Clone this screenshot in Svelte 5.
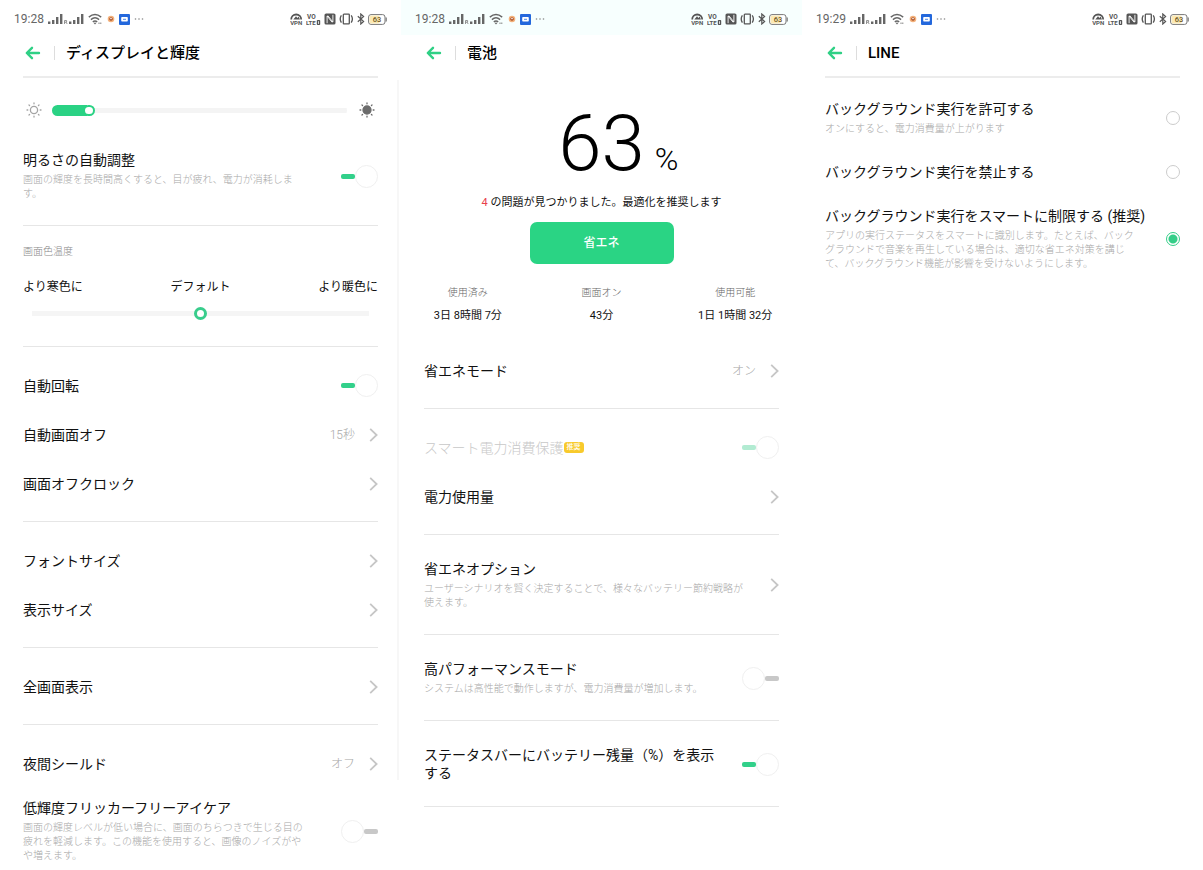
<script>
  let brightness = $state(11);
  let temperature = $state(50);
  let background = $state('smart');

  const rotation = [
    { type: 'toggle', title: '自動回転', on: true },
    { type: 'link', title: '自動画面オフ', value: '15秒' },
    { type: 'link', title: '画面オフクロック' }
  ];
  const sizes = [
    { type: 'link', title: 'フォントサイズ' },
    { type: 'link', title: '表示サイズ' }
  ];
  const fullscreen = [{ type: 'link', title: '全画面表示' }];
  const night = [
    { type: 'link', title: '夜間シールド', value: 'オフ' },
    {
      type: 'toggle',
      title: '低輝度フリッカーフリーアイケア',
      desc: '画面の輝度レベルが低い場合に、画面のちらつきで生じる目の疲れを軽減します。この機能を使用すると、画像のノイズがやや増えます。',
      on: false
    }
  ];
  const displayGroups = [rotation, sizes, fullscreen, night];

  const batteryGroups = [
    [{ type: 'link', title: '省エネモード', value: 'オン' }],
    [
      { type: 'toggle', title: 'スマート電力消費保護', badge: '推奨', on: true, disabled: true },
      { type: 'link', title: '電力使用量' }
    ],
    [
      {
        type: 'link',
        title: '省エネオプション',
        desc: 'ユーザーシナリオを賢く決定することで、様々なバッテリー節約戦略が使えます。'
      }
    ],
    [
      {
        type: 'toggle',
        title: '高パフォーマンスモード',
        desc: 'システムは高性能で動作しますが、電力消費量が増加します。',
        on: false
      }
    ],
    [{ type: 'toggle', title: 'ステータスバーにバッテリー残量（%）を表示する', on: true }]
  ];

  const stats = [
    { label: '使用済み', value: '3日 8時間 7分' },
    { label: '画面オン', value: '43分' },
    { label: '使用可能', value: '1日 1時間 32分' }
  ];

  const options = [
    { id: 'allow', title: 'バックグラウンド実行を許可する', desc: 'オンにすると、電力消費量が上がります' },
    { id: 'deny', title: 'バックグラウンド実行を禁止する' },
    {
      id: 'smart',
      title: 'バックグラウンド実行をスマートに制限する (推奨)',
      desc: 'アプリの実行ステータスをスマートに識別します。たとえば、バックグラウンドで音楽を再生している場合は、適切な省エネ対策を講じて、バックグラウンド機能が影響を受けないようにします。'
    }
  ];
</script>

{#snippet signal()}
  <svg width="16" height="12" viewBox="0 0 16 12" fill="#666">
    <rect x="0" y="8.5" width="2.4" height="2.5" /><rect x="4" y="7" width="2.4" height="4" />
    <rect x="8" y="4" width="2.4" height="7" /><rect x="12" y="1" width="2.4" height="10" />
  </svg>
{/snippet}

{#snippet status(time)}
  <div class="status">
    <div class="status-left">
      <span class="time">{time}</span>
      {@render signal()}
      <svg class="roam" width="4" height="12" viewBox="0 0 4 12" fill="none" stroke="#888" stroke-width=".9"><path d="M.5 11V7.5H2.6V9.2H.5M2 9.2L3.2 11" /></svg>
      {@render signal()}
      <svg class="wifi" width="15" height="12" viewBox="0 0 15 12" fill="none" stroke="#666" stroke-width="1.4">
        <path d="M.8 4.1Q7 -1.2 13.2 4.1M2.9 6.6Q7 3.1 11.1 6.6M4.8 8.9Q7 7.1 9.2 8.9" />
        <path d="M7 11.4L5.7 10Q7 9.1 8.3 10Z" fill="#666" stroke="none" /><path d="M11 9.5V11M12.8 9.5V11" stroke-width=".8" />
      </svg>
      <svg class="dot" width="8" height="8" viewBox="0 0 8 8"><circle cx="4" cy="4" r="3.3" fill="#f4b27c" /><circle cx="4" cy="4" r="1.8" fill="#a34a24" /><circle cx="4" cy="3.6" r=".8" fill="#fff" /></svg>
      <svg class="chat" width="11" height="11" viewBox="0 0 11 11"><rect width="11" height="11" rx="1" fill="#2468dc" /><path d="M3 3H8Q8.8 3 8.8 4V6.6Q8.8 7.6 8 7.6H3Q2.2 7.6 2.2 6.6V4Q2.2 3 3 3Z" fill="#fff" /><path d="M4 5.3H7" stroke="#2468dc" stroke-width=".8" /></svg>
      <svg class="more" width="10" height="4" viewBox="0 0 10 4" fill="#888"><circle cx="1.5" cy="2" r=".8" /><circle cx="5" cy="2" r=".8" /><circle cx="8.5" cy="2" r=".8" /></svg>
    </div>
    <div class="status-right">
      <svg width="13" height="14" viewBox="0 0 13 14">
        <path d="M1.2 7.5A5 5 0 0 1 11.2 7.5" fill="none" stroke="#555" stroke-width="1.8" />
        <path d="M3.3 7.6L6 4.2L7.4 6L8.6 4.5L10 7.6Z" fill="#555" />
        <text x="6.2" y="13.2" text-anchor="middle" font-size="6" font-weight="700" fill="#555">VPN</text>
      </svg>
      <svg width="15" height="14" viewBox="0 0 15 14" fill="#555" font-weight="700">
        <text x="1" y="6.8" font-size="6.5">VO</text><text x="0" y="13" font-size="6">LTE</text>
        <rect x="10.8" y="8" width="3.4" height="5" rx=".8" /><path d="M12.5 9.2V11.9" stroke="#fff" stroke-width=".8" />
      </svg>
      <svg width="12" height="12" viewBox="0 0 12 12">
        <rect x=".5" y=".5" width="11" height="11" rx="1.6" fill="#555" />
        <path d="M3.1 10.2V3L8.2 9.4M8.9 1.8V9L3.8 2.6" fill="none" stroke="#fff" stroke-width=".9" />
      </svg>
      <svg width="15" height="12" viewBox="0 0 15 12" fill="none" stroke="#555" stroke-width="1.3">
        <rect x="4.3" y="1.2" width="6" height="9.6" rx=".6" /><path d="M2.4 2.4Q0 6 2.4 9.6M12.2 2.4Q14.6 6 12.2 9.6" />
      </svg>
      <svg width="8" height="12" viewBox="0 0 8 12" fill="none" stroke="#555" stroke-width="1.2"><path d="M.8 3.3L6.6 8.4L3.8 11V1L6.6 3.6L.8 8.7" /></svg>
      <svg width="19" height="11" viewBox="0 0 19 11">
        <rect x=".6" y=".6" width="16.4" height="9.8" rx="2.4" fill="#fff" stroke="#777" stroke-width="1" />
        <rect x="1.6" y="1.6" width="10" height="7.8" rx="1.5" fill="#fbe9b4" /><path d="M18.2 3.6V7.4" stroke="#777" stroke-width="1.2" />
        <text x="8.9" y="8.3" text-anchor="middle" font-size="7.5" font-weight="500" fill="#6b5420">63</text>
      </svg>
    </div>
  </div>
{/snippet}

{#snippet header(title, plain)}
  <header class:plain>
    <button class="back" aria-label="戻る">
      <svg width="16" height="14" viewBox="0 0 16 14" fill="none" stroke="#2fd085" stroke-width="2.4" stroke-linejoin="round" stroke-linecap="round"><path d="M14 7H2M7 1.8L1.8 7L7 12.2" /></svg>
    </button>
    <h1>{title}</h1>
  </header>
{/snippet}

{#snippet words(item)}
  <span class="words">
    <span class="title">{item.title}{#if item.badge}<em class="badge">{item.badge}</em>{/if}</span>
    {#if item.desc}<span class="desc">{item.desc}</span>{/if}
  </span>
{/snippet}

{#snippet row(item)}
  {#if item.type === 'toggle'}
    <label class="row" class:disabled={item.disabled}>
      {@render words(item)}
      <input class="switch" type="checkbox" bind:checked={item.on} disabled={item.disabled} />
    </label>
  {:else}
    <button class="row link">
      {@render words(item)}
      {#if item.value}<span class="value">{item.value}</span>{/if}
      <svg class="chevron" width="9" height="14" viewBox="0 0 9 14" fill="none" stroke="#c6c6c6" stroke-width="1.8"><path d="M1.2 .9L7.6 7L1.2 13.1" /></svg>
    </button>
  {/if}
{/snippet}

<main>
  <section class="screen divided">
    {@render status('19:28')}
    {@render header('ディスプレイと輝度', false)}
    <div class="group first">
      <div class="brightness">
        <svg width="16" height="16" viewBox="0 0 16 16" fill="none" stroke="#a4a4a4" stroke-width="1.3" stroke-linecap="round">
          <circle cx="8" cy="8" r="3.6" /><path d="M8 1V1.8M8 14.2V15M1 8H1.8M14.2 8H15M3 3L3.6 3.6M12.4 12.4L13 13M3 13L3.6 12.4M12.4 3.6L13 3" />
        </svg>
        <input type="range" class="level" aria-label="輝度" min="0" max="100" bind:value={brightness} style="--level: {brightness}%" />
        <svg width="16" height="16" viewBox="0 0 16 16" stroke="#6c6c6c" stroke-width="1.3" stroke-linecap="round">
          <circle cx="8" cy="8" r="4" fill="#6c6c6c" /><path d="M8 1V1.8M8 14.2V15M1 8H1.8M14.2 8H15M3 3L3.6 3.6M12.4 12.4L13 13M3 13L3.6 12.4M12.4 3.6L13 3" />
        </svg>
      </div>
      {@render row({ type: 'toggle', title: '明るさの自動調整', desc: '画面の輝度を長時間高くすると、目が疲れ、電力が消耗します。', on: true })}
    </div>
    <div class="temperature">
      <h2>画面色温度</h2>
      <div class="marks"><span>より寒色に</span><span>デフォルト</span><span>より暖色に</span></div>
      <input type="range" class="balance" aria-label="画面色温度" min="0" max="100" bind:value={temperature} />
    </div>
    {#each displayGroups as group}
      <div class="group">{#each group as item}{@render row(item)}{/each}</div>
    {/each}
  </section>

  <section class="screen tinted">
    {@render status('19:28')}
    {@render header('電池', true)}
    <div class="summary">
      <p class="charge"><span class="number">63</span><span class="percent">%</span></p>
      <p class="message"><b>4</b> の問題が見つかりました。最適化を推奨します</p>
      <button class="save">省エネ</button>
      <dl>
        {#each stats as stat}
          <div><dt>{stat.label}</dt><dd>{stat.value}</dd></div>
        {/each}
      </dl>
    </div>
    {#each batteryGroups as group}
      <div class="group ruled">{#each group as item}{@render row(item)}{/each}</div>
    {/each}
  </section>

  <section class="screen">
    {@render status('19:29')}
    {@render header('LINE', false)}
    <div class="options">
      {#each options as option}
        <label class="row choice">
          {@render words(option)}
          <input type="radio" name="background" value={option.id} bind:group={background} />
        </label>
      {/each}
    </div>
  </section>
</main>

<style>
  :global(body) {
    margin: 0;
    background: #fff;
  }
  main {
    display: grid;
    grid-template-columns: repeat(3, 1fr);
    font-family: Roboto, 'Noto Sans CJK JP', sans-serif;
    color: #111;
  }
  h1, h2, p, dl, dd {
    margin: 0;
  }
  button {
    padding: 0;
    border: 0;
    background: none;
    color: inherit;
    font: inherit;
    text-align: left;
  }
  input {
    appearance: none;
    margin: 0;
    flex: none;
  }
  svg {
    flex: none;
    display: block;
  }
  .screen {
    min-width: 0;
  }
  .divided {
    background: linear-gradient(#f7f7f7, #f7f7f7) right 2px top 80px / 2px calc(100% - 168px) no-repeat;
  }

  .status {
    display: flex;
    justify-content: space-between;
    align-items: center;
    height: 32px;
    padding: 3px 14px 0 14px;
  }
  .tinted .status {
    background: #f7fffe;
  }
  .status-left, .status-right {
    display: flex;
    align-items: center;
  }
  .status-right {
    gap: 3px;
  }
  .time {
    margin-right: 4px;
    font-size: 12px;
    line-height: 16px;
    color: #666;
  }
  .roam {
    margin-right: 1px;
  }
  .wifi {
    margin-left: 3px;
  }
  .dot {
    margin-left: 4px;
  }
  .chat {
    margin: 0 4px;
  }

  header {
    display: flex;
    align-items: center;
    height: 36px;
    margin: 0 23px;
    padding: 0 0 5px 2px;
    border-bottom: 2px solid #ececec;
  }
  header.plain {
    border-color: transparent;
  }
  .back {
    padding-right: 13px;
    border-right: 1px solid #ddd;
  }
  h1 {
    margin-left: 11px;
    font-size: 15px;
    line-height: 20px;
    font-weight: 500;
    color: #000;
  }

  .group {
    margin: 0 23px;
    padding: 14px 0 13px;
    border-bottom: 1px solid #e6e6e6;
  }
  .group:last-child:not(.ruled) {
    padding-bottom: 0;
    border: 0;
  }
  .group:last-child:not(.ruled) .row:last-child {
    padding-bottom: 5px;
  }
  .group.first {
    padding-top: 24px;
  }
  .row {
    display: flex;
    align-items: center;
    gap: 20px;
    box-sizing: border-box;
    width: 100%;
    min-height: 49px;
    padding: 11px 0;
  }
  .link {
    gap: 8px;
  }
  .choice {
    gap: 12px;
  }
  .words {
    flex: 1;
    min-width: 0;
  }
  .title {
    display: block;
    font-size: 14px;
    line-height: 18px;
  }
  .desc {
    display: block;
    margin-top: 4px;
    padding-right: 12px;
    font-size: 10px;
    line-height: 14px;
    font-weight: 300;
    color: #a8a8a8;
  }
  .value {
    margin-right: 6px;
    font-size: 12px;
    line-height: 18px;
    font-weight: 300;
    color: #a8a8a8;
  }
  .disabled .title {
    display: flex;
    align-items: center;
    font-weight: 300;
    color: #c8c8c8;
  }
  .badge {
    padding: 0 3px;
    border-radius: 3px;
    background: #f8ca2c;
    color: #fff;
    font-size: 7px;
    line-height: 11px;
    font-style: normal;
    font-weight: 500;
  }

  .switch {
    display: flex;
    flex-direction: row-reverse;
    align-items: center;
    width: 37px;
    height: 23px;
  }
  .switch::before {
    content: '';
    width: 14px;
    height: 5px;
    border-radius: 2px;
    background: #c8c8c8;
  }
  .switch::after {
    content: '';
    box-sizing: border-box;
    width: 23px;
    height: 23px;
    border: 1px solid #f0f0f0;
    border-radius: 50%;
    background: #fff;
  }
  .switch:checked {
    flex-direction: row;
  }
  .switch:checked::before {
    background: #32d08a;
  }
  .switch:disabled::before {
    background: #b2ebd2;
  }

  .brightness {
    display: flex;
    align-items: center;
    gap: 10px;
    margin: 0 3px 22px;
  }
  .level {
    flex: 1;
    min-width: 0;
    height: 11px;
    margin-right: 2px;
    border-radius: 6px;
    background:
      linear-gradient(#2ad284, #2ad284) left / calc(var(--level) + 3px) 100% no-repeat,
      linear-gradient(#f4f4f4, #f4f4f4) center / 100% 5px no-repeat;
  }
  .level::-webkit-slider-thumb {
    appearance: none;
    box-sizing: border-box;
    width: 12px;
    height: 11px;
    border: 2px solid #2ad284;
    border-radius: 6px;
    background: #fff;
  }
  .temperature {
    margin: 0 23px;
    padding: 19px 0 26px;
    border-bottom: 1px solid #e6e6e6;
  }
  h2 {
    font-size: 10px;
    line-height: 14px;
    font-weight: 300;
    color: #888;
  }
  .marks {
    display: flex;
    justify-content: space-between;
    margin: 19px 0 11px;
    font-size: 12px;
    line-height: 18px;
  }
  .balance {
    display: block;
    width: calc(100% - 18px);
    height: 13px;
    margin: 0 9px;
    background: linear-gradient(#f5f5f5, #f5f5f5) center / 100% 5px no-repeat;
  }
  .balance::-webkit-slider-thumb {
    appearance: none;
    box-sizing: border-box;
    width: 13px;
    height: 13px;
    border: 3px solid #38cd8c;
    border-radius: 50%;
    background: #fff;
  }

  .summary {
    display: flex;
    flex-direction: column;
    align-items: center;
    padding: 26px 0 7px;
  }
  .charge {
    display: grid;
    grid-template-columns: 1fr auto 1fr;
    align-items: baseline;
    width: 100%;
    margin-bottom: 10px;
    color: #000;
    font-weight: 300;
  }
  .number {
    grid-column: 2;
    font-size: 78px;
    line-height: 80px;
  }
  .percent {
    margin-left: 10px;
    font-size: 32px;
    line-height: 32px;
  }
  .message {
    font-size: 11px;
    line-height: 18px;
  }
  .message b {
    font-weight: 400;
    color: #e8404c;
  }
  .save {
    width: 144px;
    margin: 10px 0 22px;
    border-radius: 7px;
    background: #2ad484;
    color: #fff;
    font-size: 12px;
    line-height: 42px;
    font-weight: 500;
    text-align: center;
  }
  dl {
    display: grid;
    grid-template-columns: repeat(3, 1fr);
    width: 100%;
    text-align: center;
  }
  dt {
    margin-bottom: 7px;
    font-size: 10px;
    line-height: 14px;
    font-weight: 300;
    color: #666;
  }
  dd {
    font-size: 11px;
    line-height: 18px;
  }

  .options {
    margin: 0 23px;
    padding-top: 11px;
  }
  input[type='radio'] {
    width: 14px;
    height: 14px;
    border: 1px solid #ccc;
    border-radius: 50%;
  }
  input[type='radio']:checked {
    border-color: #34ce88;
    background: radial-gradient(circle, #34ce88 4px, transparent 5px);
  }
</style>
